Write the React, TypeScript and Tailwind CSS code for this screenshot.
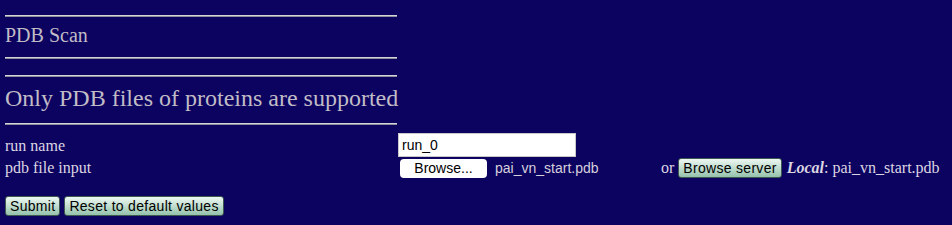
import React from "react";

const serif = { fontFamily: '"Liberation Serif", "Times New Roman", serif' };
const sans = { fontFamily: '"Liberation Sans", Arial, sans-serif' };

function Hr() {
  return <div className="h-[2px] w-[392px] border-t border-t-[#d4d4d4] border-b border-b-[#8e8e9e]" />;
}

function GreenButton({ children }: { children: React.ReactNode }) {
  return (
    <button
      className="h-[20px] px-[4px] rounded-[3px] border border-[#3e5a50] bg-gradient-to-b from-[#eef8f3] to-[#95c2ac] text-[14px] leading-[18px] tracking-[0.3px] text-black"
      style={sans}
    >
      {children}
    </button>
  );
}

export default function App() {
  return (
    <div className="w-[952px] h-[225px] bg-[#0c0260] pl-[5px] pt-[15px]" style={serif}>
      <Hr />
      <div className="mt-[7px] h-[23px] text-[20px] leading-[23px] text-[#c0bcc6]">PDB Scan</div>
      <div className="mt-[10px]"><Hr /></div>
      <div className="mt-[16px]"><Hr /></div>
      <div className="mt-[7px] h-[28px] text-[24px] leading-[28px] text-[#c0bcc6] whitespace-nowrap">
        Only PDB files of proteins are supported
      </div>
      <div className="mt-[11px]"><Hr /></div>

      <div className="mt-[8px] flex items-center h-[24px]">
        <div className="w-[393px] text-[16px] leading-[18px] text-[#dcd6e2] pt-[2px]">run name</div>
        <div className="w-[178px] h-[24px] bg-white border border-[#c8c8c8] pl-[3px] text-[14px] leading-[22px] text-black" style={sans}>
          run_0
        </div>
      </div>

      <div className="mt-[1px] flex items-center h-[20px]">
        <div className="w-[393px] text-[16px] leading-[18px] text-[#dcd6e2]">pdb file input</div>
        <div className="w-[263px] flex items-center">
          <button
            className="ml-[2px] w-[87px] h-[19px] rounded-[4px] bg-white text-[14px] leading-[18px] text-black"
            style={sans}
          >
            Browse...
          </button>
          <span className="ml-[8px] text-[14px] text-[#d6d0dc]" style={sans}>pai_vn_start.pdb</span>
        </div>
        <span className="text-[16px] text-[#dcd6e2]">or</span>
        <span className="ml-[4px]"><GreenButton>Browse server</GreenButton></span>
        <span className="ml-[5px] text-[16px] text-[#dcd6e2]">
          <i className="font-bold">Local</i>: pai_vn_start.pdb
        </span>
      </div>

      <div className="mt-[18px] flex gap-[4px]">
        <GreenButton>Submit</GreenButton>
        <GreenButton>Reset to default values</GreenButton>
      </div>
    </div>
  );
}
